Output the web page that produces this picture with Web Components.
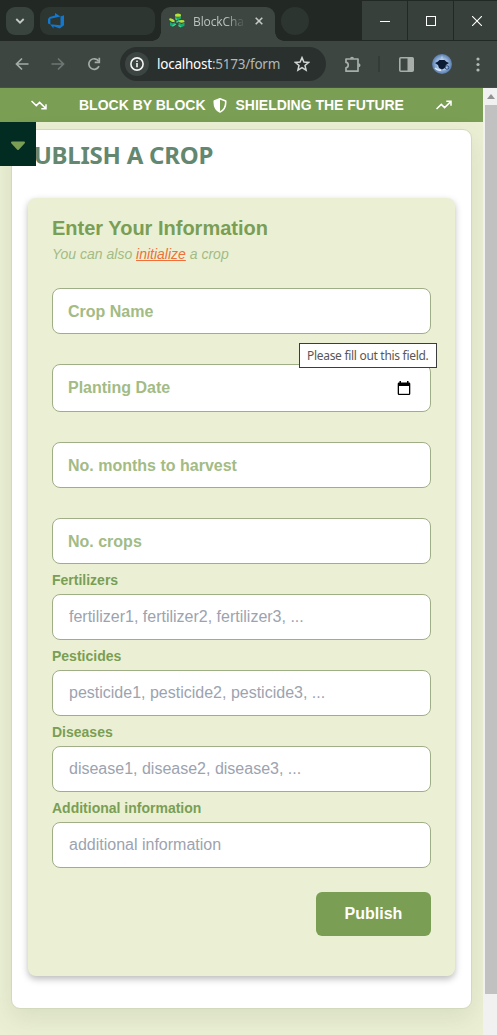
<!DOCTYPE html>
<html lang="en">
<head>
<meta charset="utf-8">
<title>BlockChain - Publish a crop</title>
<style>
html,body{margin:0;height:100%;overflow:hidden}
body{font-family:"Liberation Sans",Arial,sans-serif}
</style>
</head>
<body>
<crop-app></crop-app>
<script>
const define = (name, html) => customElements.define(name, class extends HTMLElement {
  constructor() {
    super();
    this.attachShadow({mode: 'open'}).innerHTML = '<style>*{box-sizing:border-box}svg{display:block;flex:none}</style>' + html;
  }
});

define('browser-tabs', `<style>
:host{display:flex;height:41px;background:#222824;padding:0;font:12px "Open Sans",sans-serif;align-items:flex-end}
.menu{width:28px;height:28px;border-radius:9px;background:#3a443f;margin:0 6px 6px;display:grid;place-items:center}
.tab{width:115px;height:28px;border-radius:9px;background:#2e3631;margin-bottom:6px;padding:5px 0 0 8px}
.active{position:relative;width:114px;height:34px;margin-left:6px;border-radius:9px 9px 0 0;background:#3d4641;display:flex;align-items:center;padding:0 10px 6px 8px;color:#bdc3bf}
.active:before,.active:after{content:"";position:absolute;bottom:0;width:9px;height:9px}
.active:before{left:-9px;background:radial-gradient(circle at 0 0,transparent 8.5px,#3d4641 9px)}
.active:after{right:-9px;background:radial-gradient(circle at 100% 0,transparent 8.5px,#3d4641 9px)}
.name{width:50px;margin-left:8px;white-space:nowrap;letter-spacing:-.1px;-webkit-mask:linear-gradient(90deg,#000 65%,rgba(0,0,0,.15))}
.new{width:28px;height:28px;border-radius:50%;background:#2d3530;margin:0 0 6px 6px}
.win{margin-left:auto;display:flex;gap:1px;height:41px;padding:1px 0}
.win div{width:45px;background:#37403b;display:grid;place-items:center}
</style>
<div class="menu"><svg width="10" height="8" viewBox="0 0 10 8" fill="none" stroke="#c5cac7" stroke-width="1.8"><path d="M1.3 2 5 5.7 8.7 2"/></svg></div>
<div class="tab"><svg width="18" height="18" viewBox="0 0 18 18" fill="#1177cf"><path d="M16 3.200v10l-4.200 3.300-6.300-2.200v2.200L2 12.300l10.500 1V4.500zM12.500 4.500 7 1v2.500L1.600 5 0 7v4.500l2.400 1V6.700z"/></svg></div>
<div class="active"><svg width="16" height="16" viewBox="0 0 16 16"><g fill="#18a873"><path d="m6 3 3 1.500L12 3v2.400L9 7 6 5.400zM1 9l2.500 1.500L6 9.500v3l-2.500 1.300L1 12.400zM9.500 9.500l3 1.500 3-1.500v3.300l-3 1.500-3-1.500z"/></g><g fill="#b4e535"><ellipse cx="9" cy="2.200" rx="3" ry="1.600"/><ellipse cx="3" cy="7.200" rx="3" ry="1.400" transform="rotate(25 3 7)"/><ellipse cx="12.600" cy="8.300" rx="3" ry="1.400"/></g><g fill="none" stroke="#39dc85" stroke-width="1.400"><path d="m6.500 5.500 1.500 1.500M3.500 13 7 11M9.500 12.500l2.500 1.500M7.400 9.300l3-2"/></g></svg><span class="name">BlockCha</span><svg style="margin-left:auto;margin-right:2px" width="8" height="8" viewBox="0 0 8 8" stroke="#c5cac7" stroke-width="1.6"><path d="m.7.7 6.600 6.600m0-6.600L.7 7.300"/></svg></div>
<div class="new"></div>
<div class="win"><div><svg width="10" height="10"><path d="M0 5.500h10" stroke="#fff"/></svg></div><div><svg width="10" height="10"><rect x=".5" y=".5" width="9" height="9" fill="none" stroke="#fff"/></svg></div><div style="width:43px;padding-left:3px"><svg width="10" height="10"><path d="m0 0 10 10m0-10L0 10" stroke="#fff" stroke-width="1.1"/></svg></div></div>`);

define('browser-toolbar', `<style>
:host{display:flex;height:47px;background:#3d4641;align-items:center;padding:0 17px 0 15px;border-bottom:1px solid #46504a;font:14px "Noto Sans",sans-serif}
.url{width:206px;height:34px;border-radius:17px;background:#2a302e;margin-left:19px;display:flex;align-items:center;padding:0 16px 0 5px;color:#b2b8b5}
.info{width:24px;height:24px;border-radius:50%;background:#3c4541;display:grid;place-items:center;margin-right:8px}
b{font-weight:400;color:#fff}.t{width:125px;white-space:nowrap;font-size:13.5px;letter-spacing:-.24px}
</style>
<svg width="14" height="14" viewBox="0 0 14 14" fill="none" stroke="#a5aca8" stroke-width="1.7"><path d="M13.500 7H2M7 1.500 1.500 7 7 12.500"/></svg>
<svg style="margin-left:22px" width="14" height="14" viewBox="0 0 14 14" fill="none" stroke="#6e7773" stroke-width="1.7"><path d="M.5 7H12M7 1.500 12.500 7 7 12.500"/></svg>
<svg style="margin-left:22px" width="14" height="14" viewBox="0 0 14 14" fill="none" stroke="#a5aca8" stroke-width="1.7"><path d="M12 9.200A5.300 5.300 0 1 1 11.600 4.200"/><path d="M12.300.7v4.600H7.700"/></svg>
<div class="url"><div class="info"><svg width="14" height="14" fill="none" stroke="#f3f5f4" stroke-width="1.6"><circle cx="7" cy="7" r="6.1"/><path d="M7 6v4.300M7 3.500v1.500"/></svg></div><div class="t"><b>localhost</b>:5173/form</div>
<svg style="margin-left:12px" width="16" height="16" viewBox="0 0 16 16" fill="none" stroke="#d3d7d5" stroke-width="1.5"><path d="m8 1.600 1.900 4.400 4.800.4L11 9.500l1.100 4.700L8 11.700l-4.100 2.500L5 9.500 1.300 6.400l4.800-.4z"/></svg></div>
<svg style="margin-left:18px" width="17" height="17" viewBox="0 0 17 17" fill="none" stroke="#a8afab" stroke-width="1.7"><path d="M2 3h12v12.200H2v-3.400C5 11.400 5 6.800 2 6.400z" stroke-linejoin="round"/><path d="M6 2.700a2 2 0 0 1 4 0zM14.500 7.200a2 2 0 0 1 0 4z" fill="#a8afab" stroke="none"/></svg>
<div style="width:2px;height:16px;background:#343c38;margin-left:17px"></div>
<svg style="margin-left:19px" width="15" height="15"><rect x=".8" y=".8" width="13.4" height="13.4" rx="1" fill="none" stroke="#a8afab" stroke-width="1.6"/><path d="M8.500 1H14v13H8.500z" fill="#a8afab"/></svg>
<svg style="margin-left:18px" width="20" height="20" viewBox="0 0 20 20"><defs><radialGradient id="g"><stop stop-color="#dbe8f6"/><stop offset=".65" stop-color="#8eacd5"/><stop offset="1" stop-color="#587aab"/></radialGradient></defs><circle cx="10" cy="10" r="10" fill="url(#g)"/><path d="M10 1 4 16h12z" fill="#b9d0ed" opacity=".6"/><path d="M3 9q3-1 4.500-3h5Q14 8 17 9l-3 2-1 3-3 1.500L7 14l-1-3z" fill="#0b1a35"/><path d="M3 14q3 3 6 2" stroke="#ddecfb" stroke-width="1.500" fill="none"/><circle cx="15" cy="13.500" r="1.800" stroke="#294d86" fill="none"/></svg>
<svg style="margin-left:auto" width="4" height="15" fill="#b3b9b6"><circle cx="2" cy="2" r="1.6"/><circle cx="2" cy="7.5" r="1.6"/><circle cx="2" cy="13" r="1.6"/></svg>`);

define('top-banner', `<style>
:host{display:flex;height:34px;background:#7a9e54;color:#fff;align-items:center;padding:0 31px;font-weight:700;font-size:14px;white-space:nowrap}
</style>
<svg width="16" height="10" viewBox="0 0 16 10" fill="none" stroke="#fff" stroke-width="1.5"><path d="m.5 1 4.800 4.600L8.600 2.400l6.400 6.200M15 4.200v4.600h-4.700"/></svg>
<span style="margin-left:32px">BLOCK BY BLOCK</span>
<svg style="margin-left:7px" width="14" height="15" viewBox="0 0 14 15"><path d="M7 .8 12.700 3c.3 5-1.400 9-5.700 11C2.700 12 1 8 1.300 3z" fill="none" stroke="#fff" stroke-width="1.6" stroke-linejoin="round"/><path d="M7 1v13C2.700 12 1 8 1.300 3z" fill="#fff"/></svg>
<span style="margin-left:9px;letter-spacing:-.02px">SHIELDING THE FUTURE</span>
<svg style="margin-left:auto" width="16" height="10" viewBox="0 0 16 10" fill="none" stroke="#fff" stroke-width="1.5"><path d="m.5 9 4.800-4.600L8.600 7.600 15 1.400M10.300 1.200H15v4.600"/></svg>`);

define('side-toggle', `<style>
:host{display:grid;place-items:center;width:36px;height:44px;padding-top:4px;background:#022c22;box-sizing:border-box}
</style><svg width="16" height="10" viewBox="0 0 16 10"><path d="M2 1.500h12L8 8z" fill="#7a9e54" stroke="#7a9e54" stroke-width="2" stroke-linejoin="round"/></svg>`);

define('form-field', `<style>
:host{display:flex;box-sizing:border-box;height:46px;background:#fff;border:1px solid #a0ae88;border-radius:8px;align-items:center;justify-content:space-between;padding:0 19px 0 16px;font-size:16px;line-height:20px;color:#9ca3af;white-space:nowrap}
:host([floating]){color:#a3bb84;font-weight:700;padding-left:15px;padding-top:2px;margin-bottom:30px}
:host([date]){height:48px;padding-top:0}
:host([last]){margin-bottom:6px}
</style><slot></slot><slot name="icon"></slot>`);

define('field-group', `<style>
:host{display:block;margin-bottom:6px}
.l{height:24px;padding-top:2px;line-height:16px;font-size:14px;font-weight:700;color:#7a9e54;white-space:nowrap}
</style><div class="l"><slot name="label"></slot></div><form-field><slot></slot></form-field>`);

define('publish-button', `<style>
:host{display:grid;place-items:center;width:115px;height:44px;border-radius:6px;background:#7a9e54;color:#fff;font-weight:700;font-size:16px;margin:24px 0 0 auto}
</style><slot></slot>`);

define('field-hint', `<style>
:host{display:block;box-sizing:border-box;width:138px;height:25px;background:#fff;border:1px solid #3c3c3c;color:#575757;font:12px/23px "Noto Sans",sans-serif;padding-left:7px;white-space:nowrap;letter-spacing:-.3px}
</style><slot></slot>`);

define('crop-form', `<style>
:host{display:block;box-sizing:border-box;position:relative;height:778px;background:#ebf0d5;border-radius:8px;padding:19px 24px;box-shadow:0 3px 7px rgba(0,0,0,.27)}
h2{margin:0;font-size:20px;line-height:23px;color:#7a9e54}
p{margin:5px 0 25px;font-size:14px;line-height:18px;font-style:italic;color:#a3bb84}
a{color:#ee7139;text-decoration:underline}
field-hint{position:absolute;left:271px;top:145px}
</style>
<h2>Enter Your Information</h2>
<p>You can also <a>initialize</a> a crop</p>
<form-field floating>Crop Name</form-field>
<form-field floating date>Planting Date<svg slot="icon" width="14" height="15" viewBox="0 0 14 15"><path d="M2.500 0h1.500v1.500h6V0h1.500v1.500H12a1.300 1.300 0 0 1 1.300 1.300v10a1.300 1.300 0 0 1-1.300 1.300H2a1.300 1.300 0 0 1-1.300-1.300v-10A1.300 1.300 0 0 1 2 1.500h.5z" fill="#000"/><path d="M2 5h10v7.800H2z" fill="#fff"/></svg></form-field>
<form-field floating>No. months to harvest</form-field>
<form-field floating last>No. crops</form-field>
<field-group><span slot="label">Fertilizers</span>fertilizer1, fertilizer2, fertilizer3, ...</field-group>
<field-group><span slot="label">Pesticides</span>pesticide1, pesticide2, pesticide3, ...</field-group>
<field-group><span slot="label">Diseases</span>disease1, disease2, disease3, ...</field-group>
<field-group><span slot="label">Additional information</span>additional information</field-group>
<publish-button>Publish</publish-button>
<field-hint>Please fill out this field.</field-hint>`);

define('page-card', `<style>
:host{display:block;box-sizing:border-box;height:880px;margin:7px 11px 0;background:#fff;border:1px solid #d3d9bc;border-radius:9px;padding:10px 16px 0 16px;box-shadow:0 9px 24px rgba(80,90,50,.12)}
h1{margin:0 0 28px -9px;font:700 24px/30px "Noto Sans",sans-serif;height:30px;color:#64876f;white-space:nowrap;letter-spacing:-.24px}
</style><h1>PUBLISH A CROP</h1><crop-form></crop-form>`);

define('scroll-rail', `<style>
:host{display:flex;flex-direction:column;box-sizing:border-box;width:14px;background:#f1f1f1;padding-left:2px}
.a{height:17px;display:grid;place-items:center}
.t{height:889px;background:#c1c1c1}
</style><div class="a"><svg width="8" height="5"><path d="M0 5 4 0l4 5z" fill="#929292"/></svg></div><div class="t"></div>`);

define('crop-app', `<style>
:host{display:flex;flex-direction:column;width:497px;height:1035px;overflow:hidden}
.view{flex:1;display:flex;min-height:0}
.page{width:483px;position:relative;background:#ebf0d5;overflow:hidden}
side-toggle{position:absolute;left:0;top:34px}
</style>
<browser-tabs></browser-tabs><browser-toolbar></browser-toolbar>
<div class="view"><div class="page"><top-banner></top-banner><page-card></page-card><side-toggle></side-toggle></div><scroll-rail></scroll-rail></div>`);
</script>
</body>
</html>
